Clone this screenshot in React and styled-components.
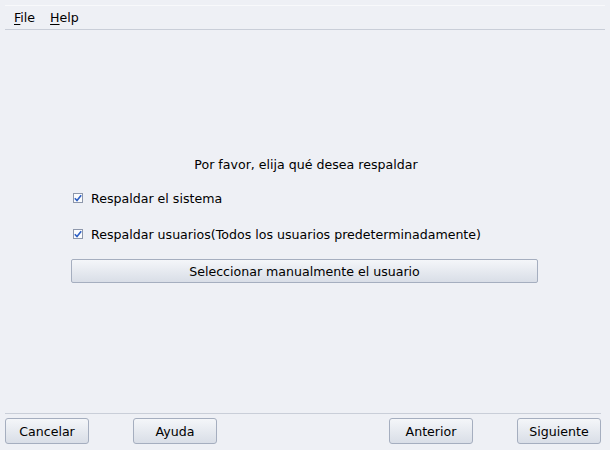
import React from "react";
import styled, { createGlobalStyle } from "styled-components";

const Global = createGlobalStyle`
  html, body { margin: 0; padding: 0; background: #eef0f5; }
  body { font-family: "DejaVu Sans", sans-serif; font-size: 12.6px; color: #000; }
  * { box-sizing: border-box; }
`;

const Window = styled.div`
  width: 610px;
  height: 450px;
  display: flex;
  flex-direction: column;
  background: #eef0f5;
`;

const MenuBar = styled.div`
  margin: 5px 5px 0 5px;
  height: 25px;
  border-top: 1px solid #f8f9fb;
  border-bottom: 1px solid #c9ced8;
  display: flex;
  align-items: center;
  gap: 15px;
  padding: 0 0 0 9px;
`;

const MenuItem = styled.span`
  u { text-decoration: underline; text-underline-offset: 2px; }
`;

const Content = styled.div`
  flex: 1;
  display: flex;
  flex-direction: column;
  padding: 126px 71px 0 71px;
`;

const Title = styled.div`
  text-align: center;
  height: 18px;
  line-height: 18px;
  margin-bottom: 15px;
  padding-left: 2px;
`;

const CheckRow = styled.label`
  display: flex;
  align-items: center;
  gap: 8px;
  height: 18px;
  margin-bottom: ${(p) => p.$gap}px;
  padding-left: 2px;
`;

const Box = styled.span`
  width: 10px;
  height: 10px;
  border: 1px solid #8d97ab;
  background: #fbfcfd;
  display: inline-flex;
  align-items: center;
  justify-content: center;
`;

const WideButton = styled.div`
  width: 467px;
  height: 24px;
  border: 1px solid #a5aebf;
  border-radius: 2px;
  background: linear-gradient(#f4f6f9, #d9dee7);
  display: flex;
  align-items: center;
  justify-content: center;
`;

const Footer = styled.div`
  margin: 0 9px 6px 5px;
  border-top: 1px solid #c9ced8;
  padding-top: 4px;
  display: flex;
  justify-content: space-between;
`;

const Group = styled.div`
  display: flex;
  gap: 44px;
`;

const Button = styled.div`
  width: 84px;
  height: 26px;
  border: 1px solid #a5aebf;
  border-radius: 3px;
  background: linear-gradient(#f4f6f9, #d9dee7);
  display: flex;
  align-items: center;
  justify-content: center;
`;

const Check = () => (
  <Box>
    <svg width="8" height="8" viewBox="0 0 8 8">
      <path d="M0.8 4.2 L3 6.5 L7.2 1.2" fill="none" stroke="#2c5fc4" strokeWidth="1.6" />
    </svg>
  </Box>
);

export default function App() {
  return (
    <Window>
      <Global />
      <MenuBar>
        <MenuItem><u>F</u>ile</MenuItem>
        <MenuItem><u>H</u>elp</MenuItem>
      </MenuBar>
      <Content>
        <Title>Por favor, elija qué desea respaldar</Title>
        <CheckRow $gap={18}>
          <Check />
          Respaldar el sistema
        </CheckRow>
        <CheckRow $gap={16}>
          <Check />
          Respaldar usuarios(Todos los usuarios predeterminadamente)
        </CheckRow>
        <WideButton>Seleccionar manualmente el usuario</WideButton>
      </Content>
      <Footer>
        <Group>
          <Button>Cancelar</Button>
          <Button>Ayuda</Button>
        </Group>
        <Group>
          <Button>Anterior</Button>
          <Button>Siguiente</Button>
        </Group>
      </Footer>
    </Window>
  );
}
